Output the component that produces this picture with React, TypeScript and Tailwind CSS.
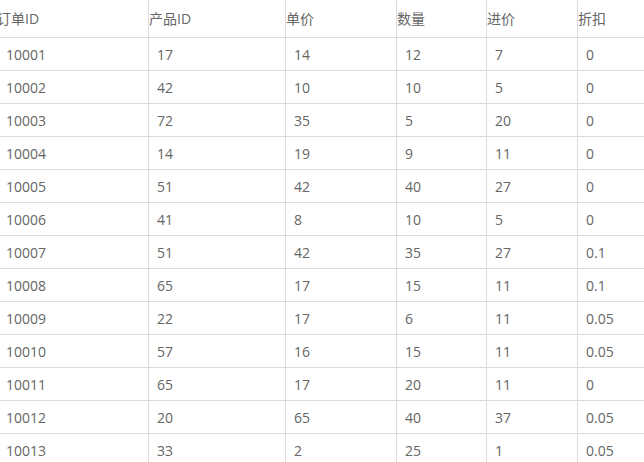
const headers = ['订单ID', '产品ID', '单价', '数量', '进价', '折扣']

const rows = [
  ['10001', '17', '14', '12', '7', '0'],
  ['10002', '42', '10', '10', '5', '0'],
  ['10003', '72', '35', '5', '20', '0'],
  ['10004', '14', '19', '9', '11', '0'],
  ['10005', '51', '42', '40', '27', '0'],
  ['10006', '41', '8', '10', '5', '0'],
  ['10007', '51', '42', '35', '27', '0.1'],
  ['10008', '65', '17', '15', '11', '0.1'],
  ['10009', '22', '17', '6', '11', '0.05'],
  ['10010', '57', '16', '15', '11', '0.05'],
  ['10011', '65', '17', '20', '11', '0'],
  ['10012', '20', '65', '40', '37', '0.05'],
  ['10013', '33', '2', '25', '1', '0.05'],
]

const cols = 'grid grid-cols-[152px_137px_111px_90px_91px_1fr]'

export default function App() {
  return (
    <div className="w-[644px] h-[462px] overflow-hidden bg-white text-[14px] text-[#666] font-['Open_Sans','Noto_Sans_CJK_SC',sans-serif]">
      <div className="-ml-[3px] w-[650px]">
        <div className={`${cols} h-[38px] border-b border-[#dcdcdc]`}>
          {headers.map((h, i) => (
            <div key={h} className={`flex items-center ${i < 5 ? 'border-r border-[#dcdcdc]' : ''}`}>
              {h}
            </div>
          ))}
        </div>
        {rows.map((r) => (
          <div key={r[0]} className={`${cols} h-[33px] border-b border-[#dcdcdc]`}>
            {r.map((c, i) => (
              <div key={i} className={`flex items-center pl-2 ${i === 0 ? 'pl-[9px]' : ''} ${i < 5 ? 'border-r border-[#dcdcdc]' : ''}`}>
                {c}
              </div>
            ))}
          </div>
        ))}
      </div>
    </div>
  )
}
